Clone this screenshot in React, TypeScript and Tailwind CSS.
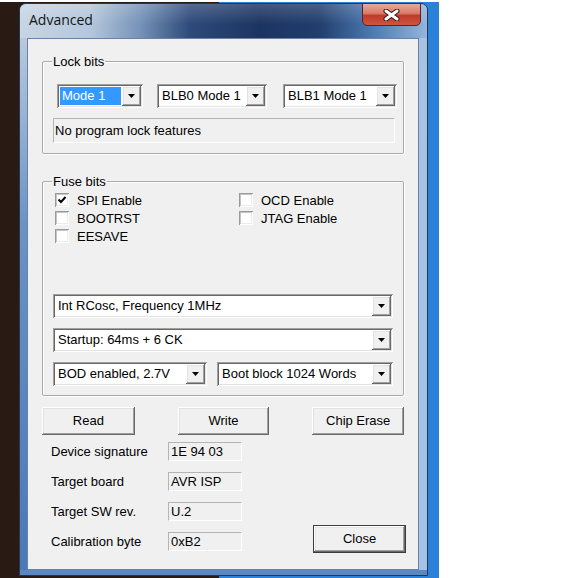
import React from "react";

// Classic 3D edges used by the dialog controls
const RAISED =
  "shadow-[inset_-1px_-1px_0_#696969,inset_1px_1px_0_#ffffff,inset_-2px_-2px_0_#a0a0a0,inset_2px_2px_0_#e3e3e3]";
const SUNKEN =
  "shadow-[inset_1px_1px_0_#a0a0a0,inset_-1px_-1px_0_#ffffff,inset_2px_2px_0_#696969,inset_-2px_-2px_0_#e3e3e3]";

function Arrow() {
  return (
    <svg width="7" height="4" viewBox="0 0 7 4">
      <path d="M0 0H7L3.5 4Z" fill="#000" />
    </svg>
  );
}

function Combo({
  value,
  className,
  selected,
}: {
  value: string;
  className: string;
  selected?: boolean;
}) {
  return (
    <div className={`flex h-[24px] bg-white p-[2px] ${SUNKEN} ${className}`}>
      <div className="flex-1 flex min-w-0 p-[1px]">
        {selected ? (
          <span className="flex-1 flex items-center bg-[#3399ff] text-white pl-[2px]">{value}</span>
        ) : (
          <span className="flex-1 flex items-center pl-[2px] whitespace-nowrap overflow-hidden">{value}</span>
        )}
      </div>
      <div className={`w-[19px] h-full bg-[#f0f0f0] flex items-center justify-center ${RAISED}`}>
        <Arrow />
      </div>
    </div>
  );
}

function Check({ label, checked }: { label: string; checked?: boolean }) {
  return (
    <div className="h-[18px] flex items-center gap-[8px]">
      <div
        className={`w-[14px] h-[14px] bg-white flex items-center justify-center shadow-[inset_1px_1px_0_#9a9a9a,inset_-1px_-1px_0_#ffffff,inset_2px_2px_0_#c4c4c4,inset_-2px_-2px_0_#ececec]`}
      >
        {checked && (
          <svg width="10" height="10" viewBox="0 0 10 10">
            <path d="M1.5 4.5L4 7L8.5 2" fill="none" stroke="#000" strokeWidth="2" />
          </svg>
        )}
      </div>
      <span className="leading-[15px]">{label}</span>
    </div>
  );
}

function Group({
  title,
  className,
  children,
}: {
  title: string;
  className: string;
  children: React.ReactNode;
}) {
  return (
    <div
      className={`border border-[#a9a9a9] rounded-[2px] shadow-[1px_1px_0_#ffffff,inset_1px_1px_0_#ffffff] flex flex-col ${className}`}
    >
      <span className="-mt-[8px] ml-[9px] px-[1px] w-fit bg-[#f0f0f0] leading-[15px]">{title}</span>
      {children}
    </div>
  );
}

function Button({ label, className }: { label: string; className: string }) {
  return (
    <div className={`h-[28px] bg-[#f0f0f0] flex items-center justify-center ${RAISED} ${className}`}>
      {label}
    </div>
  );
}

function Field({ label, value }: { label: string; value: string }) {
  return (
    <div className="flex items-center h-[19px]">
      <span className="ml-[9px] w-[117px] leading-[15px]">{label}</span>
      <div className="w-[74px] h-[19px] flex items-center pl-[2px] border border-t-[#b4b4b4] border-l-[#b4b4b4] border-r-white border-b-white bg-[#f0f0f0]">
        {value}
      </div>
    </div>
  );
}

function CloseGlyph() {
  return (
    <svg width="17" height="12" viewBox="0 0 17 12">
      <path d="M3 2L14 10M14 2L3 10" stroke="#3b1512" strokeWidth="5" strokeLinecap="round" />
      <path d="M3 2L14 10M14 2L3 10" stroke="#ffffff" strokeWidth="3" strokeLinecap="round" />
    </svg>
  );
}

function Client() {
  return (
    <div className="w-[392px] border border-[#6b82a2] bg-[#f0f0f0] px-[14px] flex flex-col">
      <Group title="Lock bits" className="mt-[22px] h-[93px]">
        <div className="mt-[15px] ml-[14px] flex">
          <Combo className="w-[86px]" value="Mode 1" selected />
          <Combo className="ml-[14px] w-[110px]" value="BLB0 Mode 1" />
          <Combo className="ml-[16px] w-[114px]" value="BLB1 Mode 1" />
        </div>
        <div className="mt-[10px] ml-[10px] w-[342px] h-[25px] flex items-center pl-[1px] border border-t-[#b4b4b4] border-l-[#b4b4b4] border-r-white border-b-white">
          No program lock features
        </div>
      </Group>

      <Group title="Fuse bits" className="mt-[27px] h-[215px]">
        <div className="mt-[2px] ml-[12px] flex">
          <div className="w-[184px] flex flex-col">
            <Check label="SPI Enable" checked />
            <Check label="BOOTRST" />
            <Check label="EESAVE" />
          </div>
          <div className="flex flex-col">
            <Check label="OCD Enable" />
            <Check label="JTAG Enable" />
          </div>
        </div>
        <div className="mt-[49px] ml-[10px] flex flex-col gap-[10px]">
          <Combo className="w-[340px]" value="Int RCosc, Frequency 1MHz" />
          <Combo className="w-[340px]" value="Startup: 64ms + 6 CK" />
          <div className="flex gap-[10px]">
            <Combo className="w-[154px]" value="BOD enabled, 2.7V" />
            <Combo className="w-[176px]" value="Boot block 1024 Words" />
          </div>
        </div>
      </Group>

      <div className="mt-[11px] flex">
        <Button label="Read" className="w-[93px]" />
        <Button label="Write" className="ml-[43px] w-[92px]" />
        <Button label="Chip Erase" className="ml-[43px] w-[92px]" />
      </div>

      <div className="mt-[7px] flex items-end justify-between">
        <div className="flex flex-col gap-[11px]">
          <Field label="Device signature" value="1E 94 03" />
          <Field label="Target board" value="AVR ISP" />
          <Field label="Target SW rev." value="U.2" />
          <Field label="Calibration byte" value="0xB2" />
        </div>
        <div className="-mr-[2px] -mb-[2px] w-[93px] h-[28px] border border-[#3c3c3c] flex">
          <div className={`flex-1 bg-[#f0f0f0] flex items-center justify-center ${RAISED}`}>Close</div>
        </div>
      </div>
    </div>
  );
}

export default function App() {
  return (
    <div className="w-[582px] h-[578px] bg-white pt-[2px] font-['Liberation_Sans',Arial,sans-serif] text-[13px] text-black">
      <div className="w-[439px] h-[576px] pl-[19px] pt-[1px] bg-[linear-gradient(to_right,#2a1a14_0%,#2a1a14_50%,#2b80d8_50%,#2b80d8_100%)]">
        <div className="w-[409px] h-[573px] rounded-t-[7px] border border-[#24374f] flex flex-col overflow-hidden bg-[#5a88c2]">
          <div className="h-[34px] flex justify-between bg-[linear-gradient(to_bottom,rgba(255,255,255,0.18),rgba(255,255,255,0)_60%),linear-gradient(to_right,#c7d5e4_0px,#b4c7dc_70px,#7692b8_120px,#2d4a7a_170px,#1c3462_240px,#213e6e_300px,#4a77b0_350px,#93b5de_407px)]">
            <span className="pl-[9px] pt-[7px] leading-[18px] font-['Open_Sans',sans-serif] text-[14px] text-[#151515]">
              Advanced
            </span>
            <div className="mr-[6px] -mt-[1px] w-[59px] h-[23px] rounded-b-[5px] border border-[#5b2420] bg-[linear-gradient(to_bottom,#e8aa9c_0%,#d77a66_45%,#c13a2a_55%,#cc5542_100%)] flex items-center justify-center">
              <CloseGlyph />
            </div>
          </div>
          <div className="flex h-[532px]">
            <div className="w-[7px] bg-[linear-gradient(to_bottom,#b7c9de,#6a93c6_35%,#4a79b8)]" />
            <Client />
            <div className="w-[8px] bg-[linear-gradient(to_bottom,#a7c3e4,#a3c3ea)]" />
          </div>
          <div className="h-[5px] bg-[#5a88c2]" />
        </div>
      </div>
    </div>
  );
}
